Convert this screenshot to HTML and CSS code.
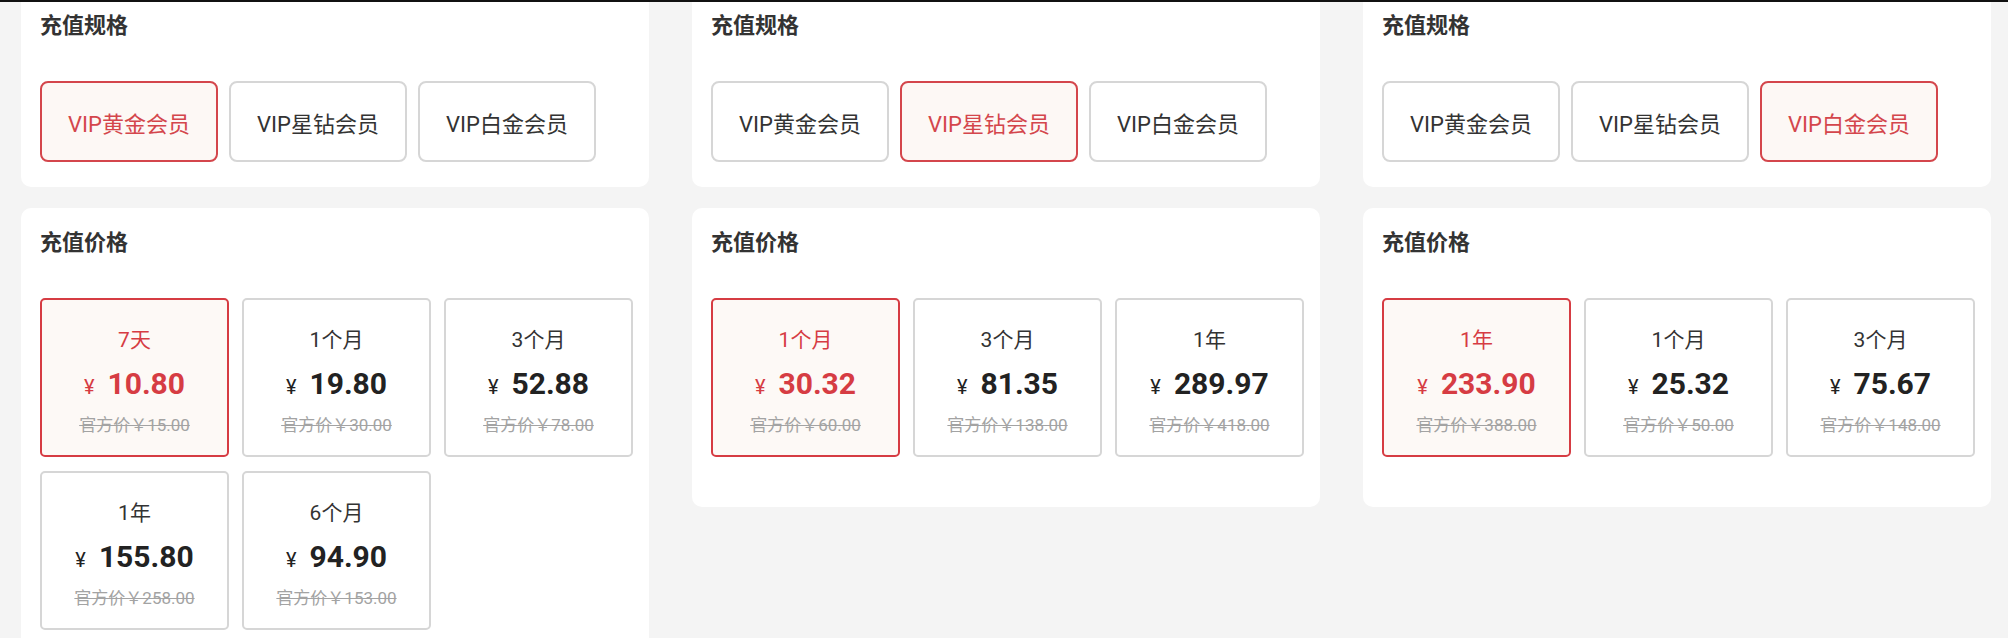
FILE: index.html
```html
<!DOCTYPE html>
<html lang="zh-CN">
<head>
  <meta charset="UTF-8">
  <meta name="viewport" content="width=device-width, initial-scale=1.0">
  <title>充值</title>
  <link rel="stylesheet" href="styles.css">
</head>
<body>
  <div class="top-line"></div>

  <div class="screens">
    <!-- 屏幕 1 -->
    <div class="screen">
      <div class="card spec-card">
        <div class="card-title">充值规格</div>
        <div class="spec-list">
          <div class="spec active">VIP黄金会员</div>
          <div class="spec">VIP星钻会员</div>
          <div class="spec">VIP白金会员</div>
        </div>
      </div>
      <div class="card price-card">
        <div class="card-title">充值价格</div>
        <div class="price-list">
          <div class="price active">
            <div class="period">7天</div>
            <div class="amount"><span class="yen">¥</span>10.80</div>
            <div class="origin">官方价￥15.00</div>
          </div>
          <div class="price">
            <div class="period">1个月</div>
            <div class="amount"><span class="yen">¥</span>19.80</div>
            <div class="origin">官方价￥30.00</div>
          </div>
          <div class="price">
            <div class="period">3个月</div>
            <div class="amount"><span class="yen">¥</span>52.88</div>
            <div class="origin">官方价￥78.00</div>
          </div>
          <div class="price">
            <div class="period">1年</div>
            <div class="amount"><span class="yen">¥</span>155.80</div>
            <div class="origin">官方价￥258.00</div>
          </div>
          <div class="price">
            <div class="period">6个月</div>
            <div class="amount"><span class="yen">¥</span>94.90</div>
            <div class="origin">官方价￥153.00</div>
          </div>
        </div>
      </div>
    </div>

    <!-- 屏幕 2 -->
    <div class="screen">
      <div class="card spec-card">
        <div class="card-title">充值规格</div>
        <div class="spec-list">
          <div class="spec">VIP黄金会员</div>
          <div class="spec active">VIP星钻会员</div>
          <div class="spec">VIP白金会员</div>
        </div>
      </div>
      <div class="card price-card">
        <div class="card-title">充值价格</div>
        <div class="price-list">
          <div class="price active">
            <div class="period">1个月</div>
            <div class="amount"><span class="yen">¥</span>30.32</div>
            <div class="origin">官方价￥60.00</div>
          </div>
          <div class="price">
            <div class="period">3个月</div>
            <div class="amount"><span class="yen">¥</span>81.35</div>
            <div class="origin">官方价￥138.00</div>
          </div>
          <div class="price">
            <div class="period">1年</div>
            <div class="amount"><span class="yen">¥</span>289.97</div>
            <div class="origin">官方价￥418.00</div>
          </div>
        </div>
      </div>
    </div>

    <!-- 屏幕 3 -->
    <div class="screen">
      <div class="card spec-card">
        <div class="card-title">充值规格</div>
        <div class="spec-list">
          <div class="spec">VIP黄金会员</div>
          <div class="spec">VIP星钻会员</div>
          <div class="spec active">VIP白金会员</div>
        </div>
      </div>
      <div class="card price-card">
        <div class="card-title">充值价格</div>
        <div class="price-list">
          <div class="price active">
            <div class="period">1年</div>
            <div class="amount"><span class="yen">¥</span>233.90</div>
            <div class="origin">官方价￥388.00</div>
          </div>
          <div class="price">
            <div class="period">1个月</div>
            <div class="amount"><span class="yen">¥</span>25.32</div>
            <div class="origin">官方价￥50.00</div>
          </div>
          <div class="price">
            <div class="period">3个月</div>
            <div class="amount"><span class="yen">¥</span>75.67</div>
            <div class="origin">官方价￥148.00</div>
          </div>
        </div>
      </div>
    </div>
  </div>
</body>
</html>
```

FILE: styles.css
```css
/* 通用 */
body {
  margin: 0;
  padding: 0;
  background-color: #f4f4f4;
  font-family: Roboto, "Noto Sans CJK SC", sans-serif;
  color: #333;
  overflow: hidden;
}

.top-line {
  height: 2px;
  background-color: #111;
}

/* 三个屏幕并排 */
.screens {
  display: grid;
  grid-template-columns: 628px 628px 628px;
  column-gap: 43px;
  padding-left: 21px;
}

.screen {
  display: flex;
  flex-direction: column;
  gap: 21px;
}

/* 卡片 */
.card {
  background: #fff;
  border-radius: 10px;
  padding: 20px 16px 50px 19px;
}

.spec-card {
  border-radius: 0 0 10px 10px;
  padding-top: 9px;
  padding-bottom: 25px;
}

.card-title {
  font-size: 22px;
  line-height: 30px;
  font-weight: bold;
  color: #333;
  margin-bottom: 40px;
}

/* 充值规格 */
.spec-list {
  display: flex;
  gap: 11px;
}

.spec {
  width: 178px;
  height: 81px;
  box-sizing: border-box;
  border: 2px solid #d6d6d6;
  border-radius: 8px;
  display: flex;
  align-items: center;
  justify-content: center;
  font-size: 22px;
  color: #333;
}

.spec.active {
  border-color: #d4464c;
  background-color: #fdf8f5;
  color: #d4464c;
}

/* 充值价格 */
.price-list {
  display: grid;
  grid-template-columns: repeat(3, 189px);
  column-gap: 13px;
  row-gap: 14px;
}

.price {
  height: 159px;
  box-sizing: border-box;
  border: 2px solid #d6d6d6;
  border-radius: 5px;
  padding-top: 26px;
  text-align: center;
}

.price.active {
  border-color: #d63c43;
  background-color: #fdf9f6;
}

.period {
  font-size: 21px;
  line-height: 28px;
  color: #333;
}

.amount {
  margin-top: 12px;
  font-size: 30px;
  line-height: 36px;
  font-weight: bold;
  color: #222;
}

.yen {
  font-size: 20px;
  font-weight: normal;
  margin-right: 13px;
}

.origin {
  margin-top: 8px;
  font-size: 17px;
  line-height: 24px;
  color: #a3a3a3;
  text-decoration: line-through;
}

.price.active .period,
.price.active .amount {
  color: #d63c43;
}
```
